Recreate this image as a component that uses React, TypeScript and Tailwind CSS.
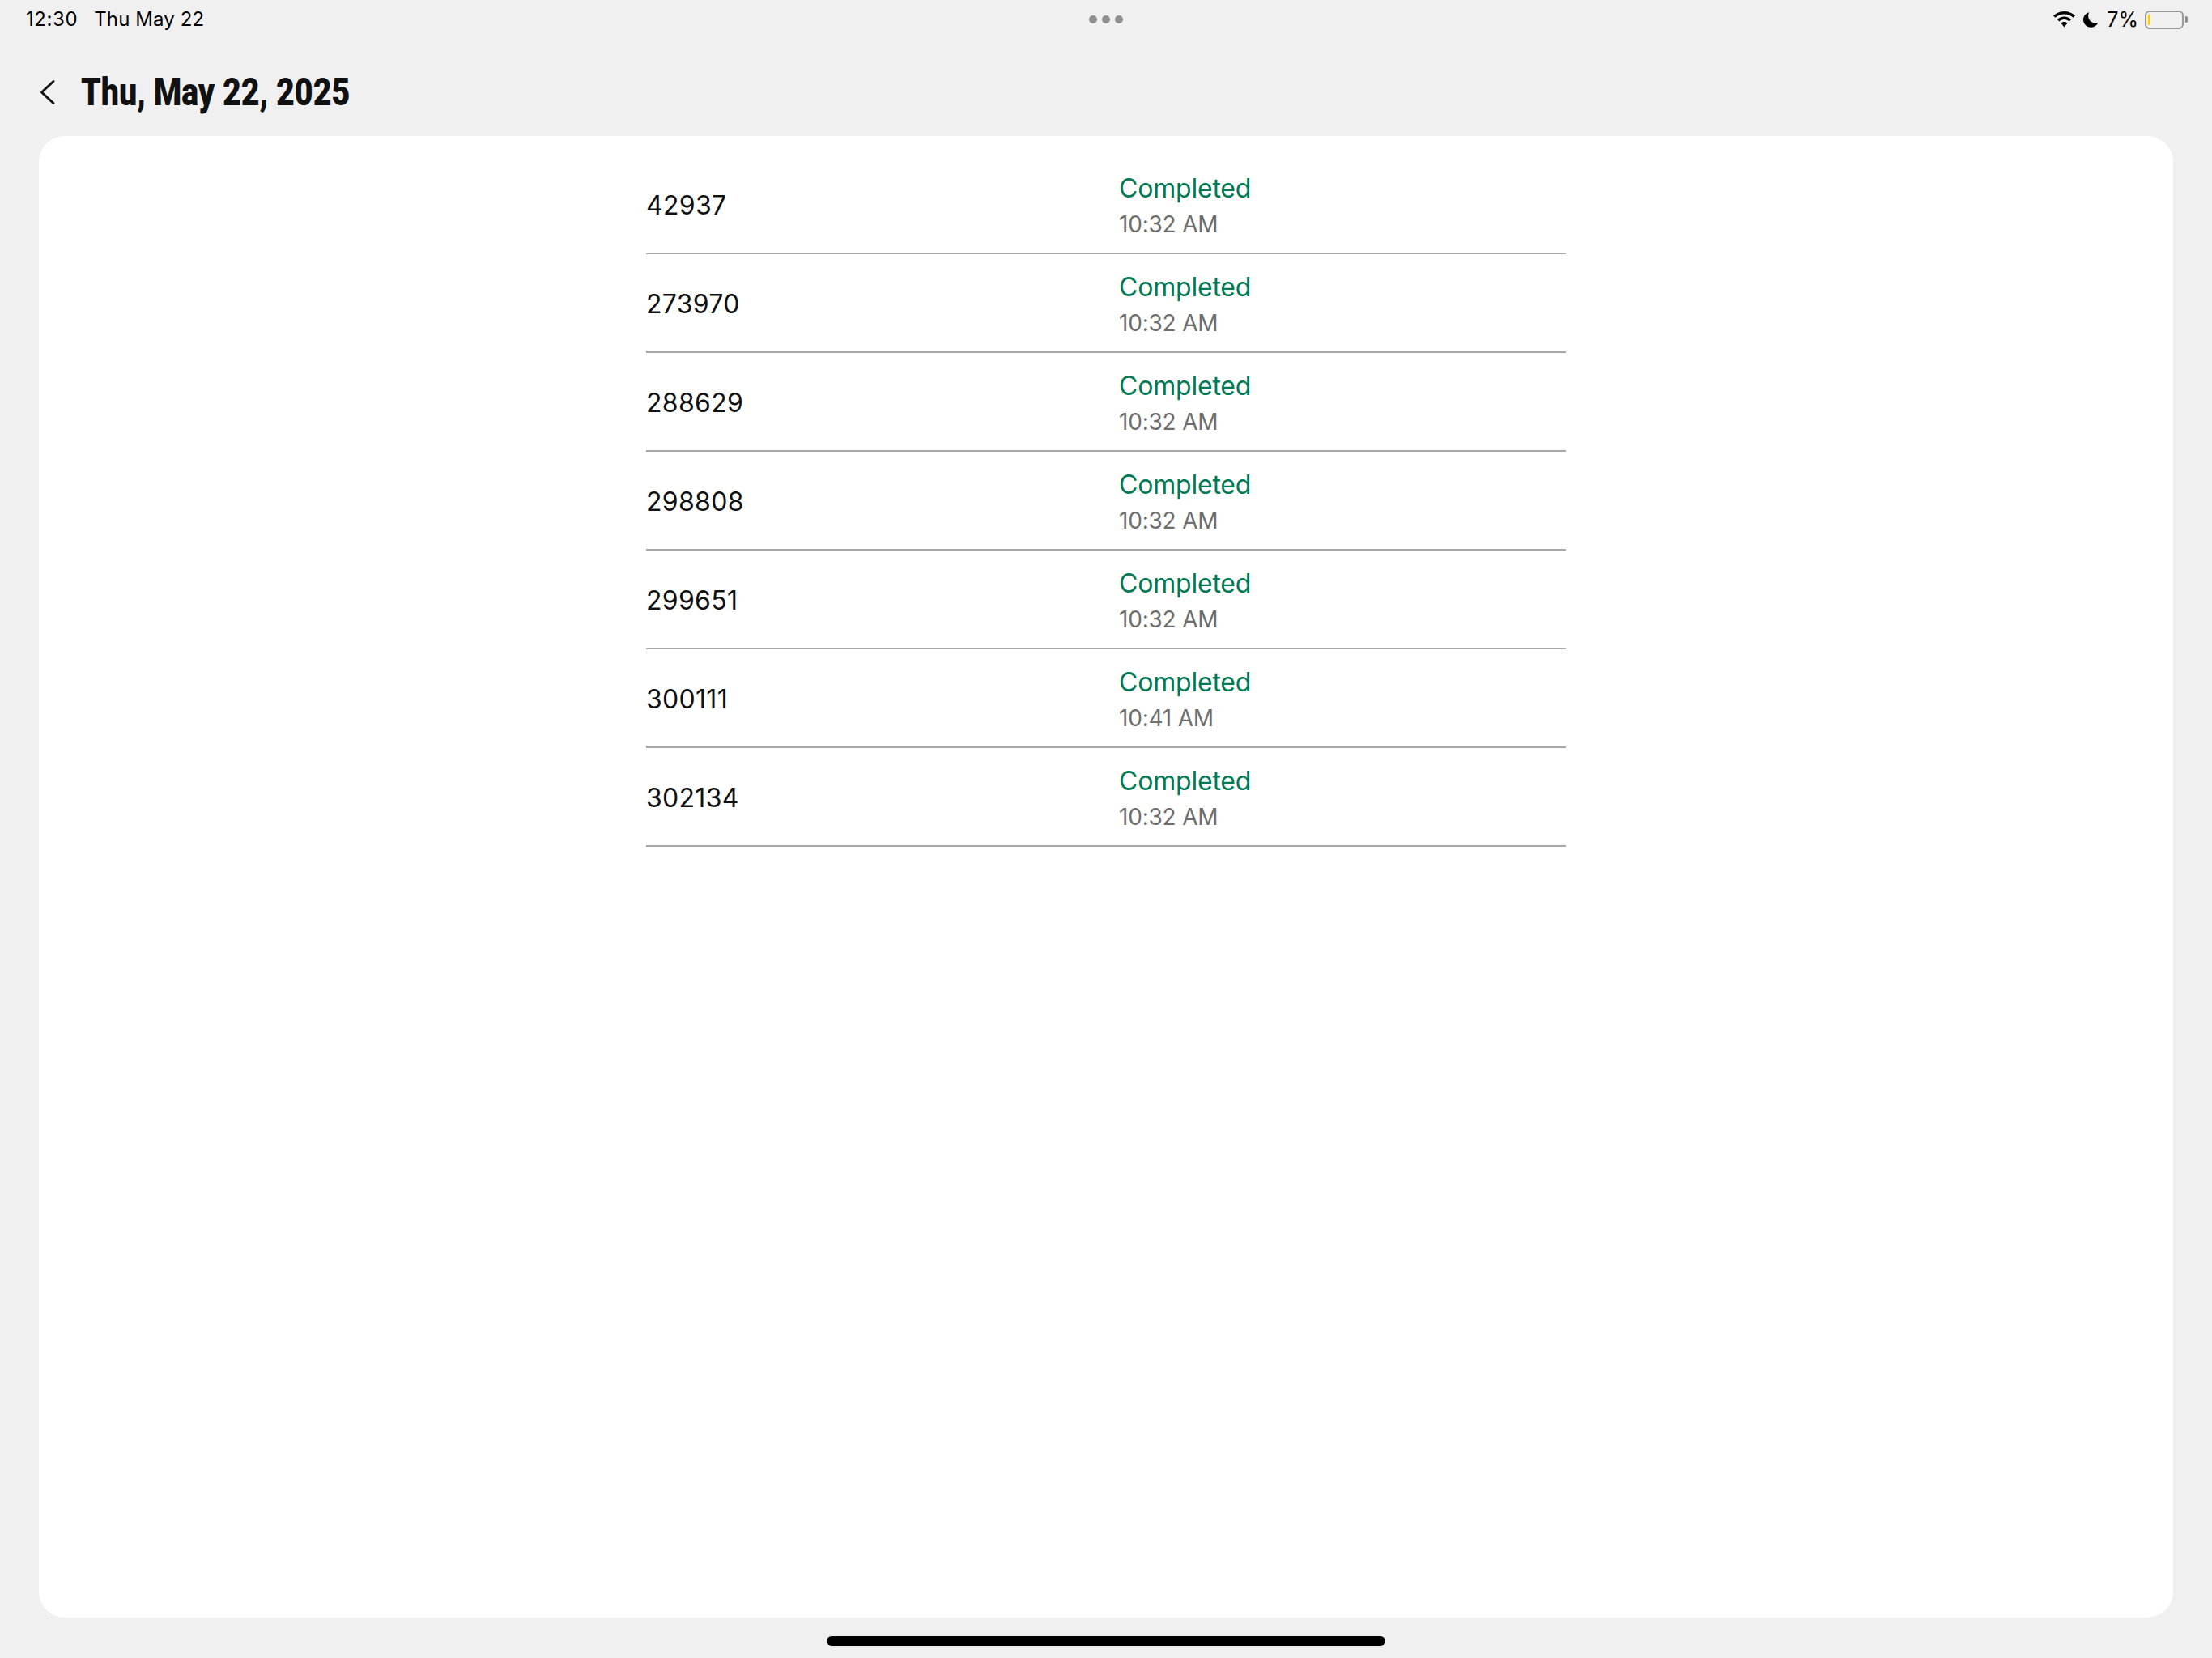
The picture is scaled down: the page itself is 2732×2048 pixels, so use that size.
const rows = [
  { id: '42937', time: '10:32 AM' },
  { id: '273970', time: '10:32 AM' },
  { id: '288629', time: '10:32 AM' },
  { id: '298808', time: '10:32 AM' },
  { id: '299651', time: '10:32 AM' },
  { id: '300111', time: '10:41 AM' },
  { id: '302134', time: '10:32 AM' },
]

function StatusBar() {
  return (
    <div className="relative h-[48px] flex items-center justify-between pl-[32px] pr-[30px] text-[24px] leading-[28px] text-black">
      <div className="flex gap-[20px]">
        <span className="tracking-[0.6px]">12:30</span>
        <span className="tracking-[0.1px]">Thu May 22</span>
      </div>
      {/* Multitasking dots */}
      <div className="absolute left-[1345px] top-[19px] flex gap-[6px]">
        <div className="w-[10px] h-[10px] rounded-full bg-[#8e8e8e]" />
        <div className="w-[10px] h-[10px] rounded-full bg-[#8e8e8e]" />
        <div className="w-[10px] h-[10px] rounded-full bg-[#8e8e8e]" />
      </div>
      <div className="flex items-center">
        <svg width="27" height="20" viewBox="0 0 27 20" className="mr-[10px]">
          <path d="M13.5 0C8.3 0 3.7 2 0 5.3l2.3 2.5C5.3 5 9.2 3.4 13.5 3.4s8.2 1.6 11.2 4.4L27 5.3C23.3 2 18.7 0 13.5 0z" fill="#000" />
          <path d="M13.5 6.6c-3.3 0-6.3 1.3-8.6 3.3l2.4 2.5c1.700-1.500 3.800-2.400 6.200-2.400s4.500.9 6.200 2.400l2.400-2.500c-2.300-2-5.300-3.300-8.600-3.300z" fill="#000" />
          <path d="M13.5 13c-1.600 0-3 .6-4.100 1.600l4.100 4.900 4.100-4.900c-1.100-1-2.500-1.600-4.100-1.600z" fill="#000" />
        </svg>
        <svg width="19" height="19" viewBox="0 0 19 19" className="mr-[10px]">
          <path d="M7.200 0.300C2.900 1.300 0 5 0 9.300 0 14.600 4.300 18.800 9.600 18.800c3.900 0 7.400-2.400 8.900-6-1 .4-2.200.6-3.300.6-5.100 0-9.100-4-9.100-9 0-1.500.4-2.900 1.100-4.100z" fill="#000" />
        </svg>
        <span className="text-[25px] mr-[8px]">7%</span>
        <div className="w-[48px] h-[23px] rounded-[6px] border-2 border-[#9a9a9a] pl-[2px] py-[3px]">
          <div className="w-[3px] h-[13px] rounded-[1px] bg-[#ffcc00]" />
        </div>
        <div className="ml-[2px] w-[3px] h-[8px] rounded-r-[2px] bg-[#8e8e8e]" />
      </div>
    </div>
  )
}

export default function App() {
  return (
    <div
      className="h-[2048px] flex flex-col bg-[#f0f0f0] overflow-hidden"
      style={{ fontFamily: "Inter, 'Liberation Sans', sans-serif" }}
    >
      <StatusBar />

      {/* Header */}
      <div className="h-[120px] pl-[44px] pt-[11px] flex items-center">
        <svg width="28" height="36" viewBox="0 0 28 36" fill="none">
          <path d="M22 4.500L7.500 18 22 31.500" stroke="#111" strokeWidth="3" strokeLinecap="round" strokeLinejoin="round" />
        </svg>
        <h1 className="ml-[28px] text-[48px] leading-[52px] font-black text-[#111] origin-left scale-x-[0.82] whitespace-nowrap" style={{ fontFamily: "Roboto, sans-serif" }}>
          Thu, May 22, 2025
        </h1>
      </div>

      {/* Card */}
      <div className="mx-[48px] h-[1830px] rounded-[32px] bg-white pt-[24px]">
        <div className="w-[1136px] mx-auto">
          {rows.map((row) => (
            <div key={row.id} className="h-[122px] border-b-2 border-[#a8a8a8] grid grid-cols-[584px_1fr] items-center">
              <div className="pt-[4px] text-[32px] leading-[40px] tracking-[0.3px] text-[#111]">{row.id}</div>
              <div className="pt-[3px]">
                <div className="text-[32px] leading-[40px] tracking-[-0.2px] text-[#007a55]">Completed</div>
                <div className="text-[28px] leading-[36px] mt-[6px] tracking-[-0.2px] text-[#6e6e6e]">{row.time}</div>
              </div>
            </div>
          ))}
        </div>
      </div>

      {/* Home indicator */}
      <div className="flex justify-center pt-[23px]">
        <div className="w-[690px] h-[12px] rounded-full bg-black" />
      </div>
    </div>
  )
}
